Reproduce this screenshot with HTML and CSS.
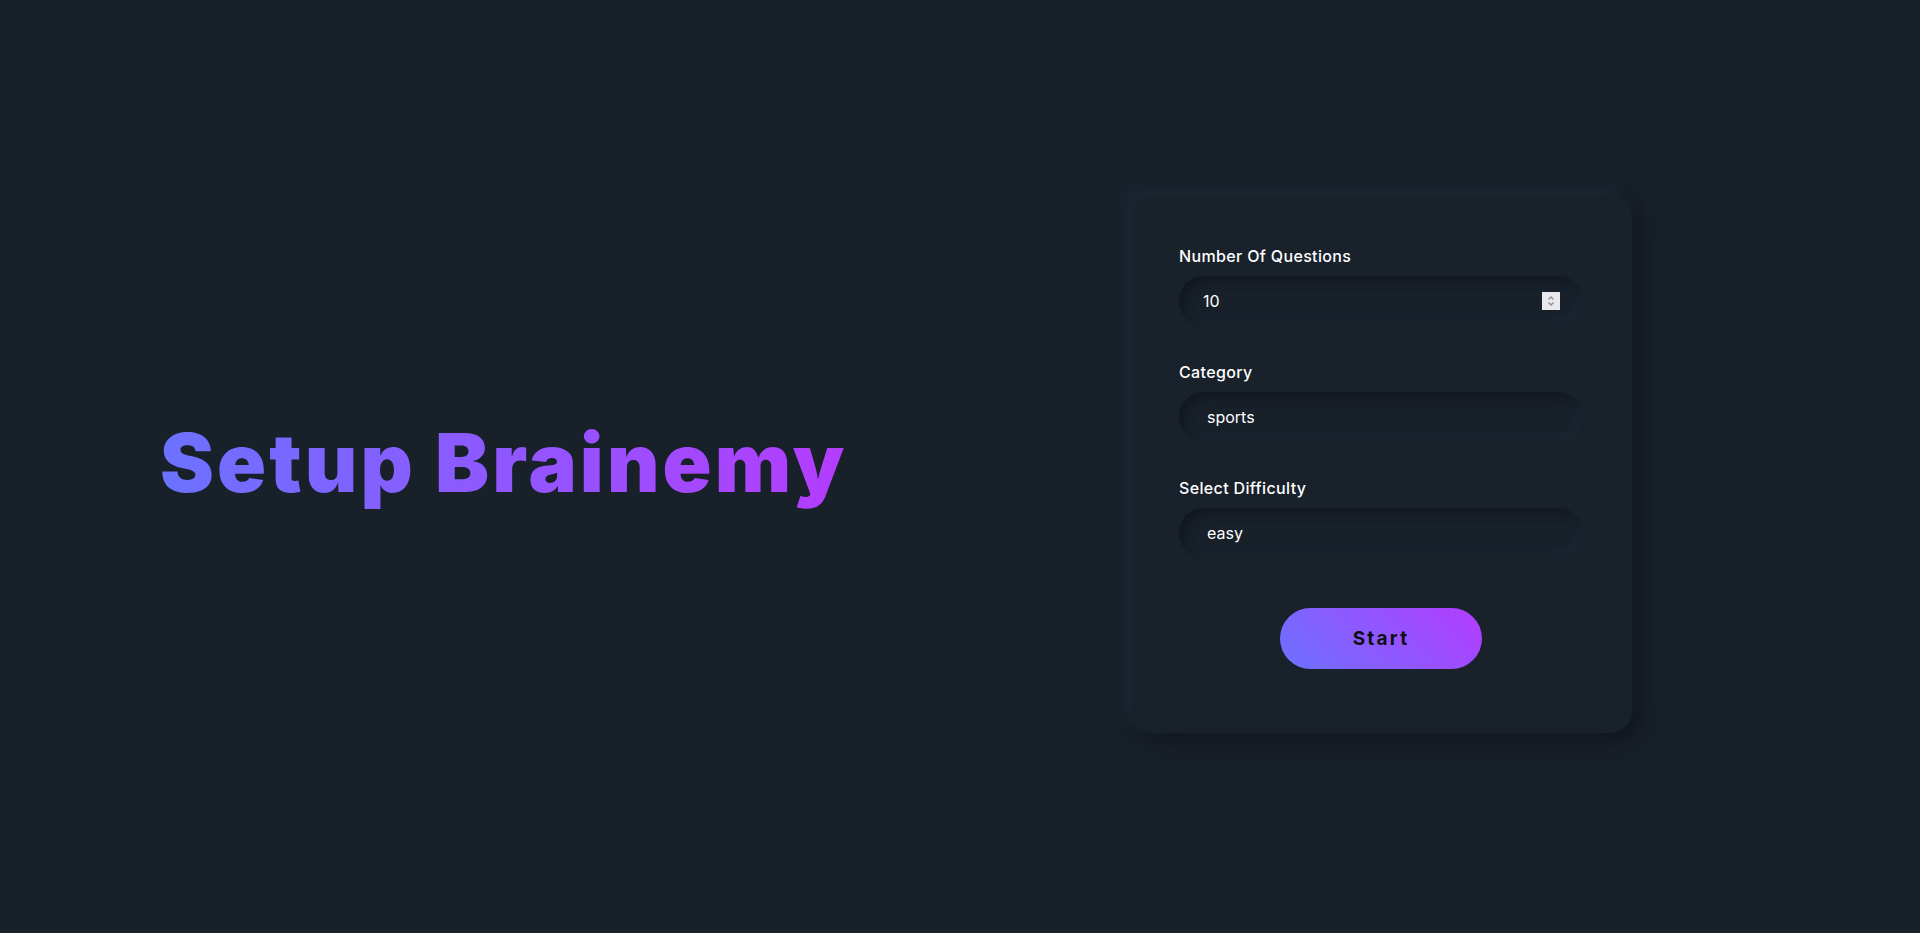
FILE: index.html
```html
<!DOCTYPE html>
<html lang="en">
<head>
<meta charset="utf-8">
<title>Setup Brainemy</title>
<link rel="stylesheet" href="styles.css">
</head>
<body>
<main class="page">
  <h1 class="title">Setup Brainemy</h1>
  <form class="card">
    <div class="field">
      <label class="label" for="amount">Number Of Questions</label>
      <div class="control">
        <input class="input input-number" id="amount" type="number" value="10">
        <span class="spinner" aria-hidden="true">
          <svg width="18" height="18" viewBox="0 0 18 18"><path d="M6.5 7.5 L9 5 L11.5 7.5" fill="none" stroke="#8e8e93" stroke-width="1.3"/><path d="M6.5 10.5 L9 13 L11.5 10.5" fill="none" stroke="#8e8e93" stroke-width="1.3"/></svg>
        </span>
      </div>
    </div>
    <div class="field">
      <label class="label" for="category">Category</label>
      <div class="control">
        <select class="input input-select" id="category"><option>sports</option></select>
      </div>
    </div>
    <div class="field">
      <label class="label" for="difficulty">Select Difficulty</label>
      <div class="control">
        <select class="input input-select" id="difficulty"><option>easy</option></select>
      </div>
    </div>
    <div class="actions">
      <button class="start" type="button">Start</button>
    </div>
  </form>
</main>
</body>
</html>
```

FILE: styles.css
```css
* { box-sizing: border-box; }
html, body { margin: 0; padding: 0; }
body {
  background: #18202a;
  color: #ffffff;
  font-family: "Inter", "Noto Sans", sans-serif;
  height: 933px;
  overflow: hidden;
}
.page {
  height: 100%;
  display: flex;
  align-items: center;
  justify-content: space-between;
  padding: 0 288px 0 160px;
}
.title {
  margin: 0;
  font-family: "Inter", sans-serif;
  font-weight: 900;
  font-size: 81px;
  line-height: 1;
  letter-spacing: 3.1px;
  background: linear-gradient(90deg, #6c72ff 0%, #b43cff 100%);
  -webkit-background-clip: text;
  background-clip: text;
  color: transparent;
  padding-bottom: 6px;
}
.card {
  width: 501px;
  margin-bottom: 5px;
  background: #19212b;
  border-radius: 22px;
  padding: 49px 49px 64px 48px;
  display: flex;
  flex-direction: column;
  gap: 34px;
  box-shadow: -8px -8px 16px #1d2631, 10px 10px 20px #121820;
}
.field {
  display: flex;
  flex-direction: column;
  gap: 8px;
}
.label {
  font-size: 16px;
  line-height: 24px;
  font-weight: 500;
  color: #ffffff;
  letter-spacing: 0.35px;
}
.control {
  position: relative;
}
.input {
  display: block;
  width: 100%;
  height: 50px;
  border: none;
  outline: none;
  border-radius: 25px;
  background: #18202a;
  color: #ffffff;
  font-family: "Inter", sans-serif;
  font-size: 16px;
  padding: 0 24px;
  box-shadow: inset 5px 5px 10px #121820, inset -5px -5px 10px #1d2631;
  -webkit-appearance: none;
  appearance: none;
}
.input-select {
  padding-left: 28px;
}
.input-number::-webkit-inner-spin-button,
.input-number::-webkit-outer-spin-button {
  -webkit-appearance: none;
  margin: 0;
}
.spinner {
  position: absolute;
  right: 23px;
  top: 16px;
  width: 18px;
  height: 18px;
  background: #e9e9ed;
  display: block;
}
.spinner svg { display: block; }
.actions {
  display: flex;
  justify-content: center;
  padding-top: 16px;
}
.start {
  width: 202px;
  height: 61px;
  border: none;
  border-radius: 31px;
  background: linear-gradient(45deg, #6b72ff 0%, #b43cff 100%);
  color: #0f0f14;
  font-family: "Inter", sans-serif;
  font-weight: 700;
  font-size: 19px;
  letter-spacing: 2.2px;
  cursor: pointer;
}
```
